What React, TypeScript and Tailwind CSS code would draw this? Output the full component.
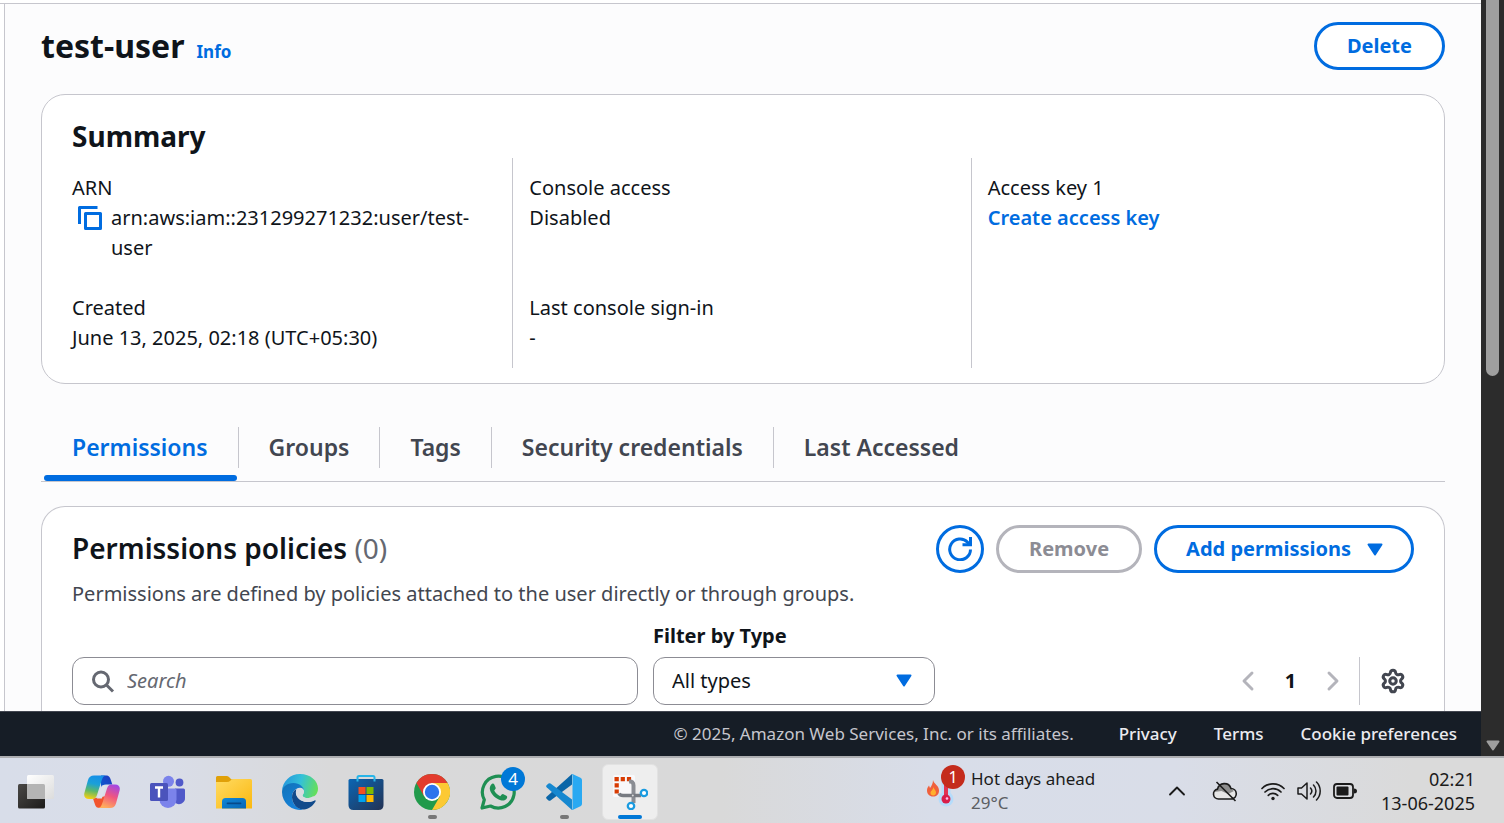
import type { ReactNode } from "react";
import { ChevronLeft, ChevronRight, ChevronUp, Settings } from "lucide-react";

const TABS = ["Permissions", "Groups", "Tags", "Security credentials", "Last Accessed"];

function Caret({ className = "" }: { className?: string }) {
  return (
    <svg viewBox="0 0 16 13" className={`h-[13px] w-4 ${className}`} aria-hidden="true">
      <path d="M1.5 1.5h13L8 11.5z" fill="#006ce0" stroke="#006ce0" strokeWidth="2" strokeLinejoin="round" />
    </svg>
  );
}

function Field({ label, children }: { label: string; children: ReactNode }) {
  return (
    <div className="min-h-[90px]">
      <dt>{label}</dt>
      <dd>{children}</dd>
    </div>
  );
}

function SummaryCard() {
  return (
    <section className="mt-6 rounded-3xl border border-[#c6c6cd] bg-white pt-[23px] pr-[15px] pb-[15px] pl-3">
      <h2 className="pl-[18px] text-[28px] leading-9 font-bold">Summary</h2>
      <div className="mt-1 grid grid-cols-3">
        <dl className="flex flex-col gap-[30px] border-l border-transparent py-[15px] pr-4 pl-[17px] [&>div:last-child]:min-h-[60px]">
          <Field label="ARN">
            <span className="flex items-start">
              <button type="button" aria-label="Copy ARN" className="mt-[3px] mr-[9px] ml-1.5 shrink-0">
                <svg viewBox="0 0 24 24" className="size-6" fill="none" stroke="#006ce0" strokeWidth="3" strokeLinejoin="round">
                  <path d="M1.500 18V1.500H19.500" />
                  <path d="M7.500 7.500h15v15h-15z" />
                </svg>
              </button>
              <span>arn:aws:iam::231299271232:user/test-user</span>
            </span>
          </Field>
          <Field label="Created">June 13, 2025, 02:18 (UTC+05:30)</Field>
        </dl>
        <dl className="flex flex-col gap-[30px] border-l border-[#c6c6cd] py-[15px] pr-4 pl-4 [&>div:last-child]:min-h-[60px]">
          <Field label="Console access">Disabled</Field>
          <Field label="Last console sign-in">-</Field>
        </dl>
        <dl className="border-l border-[#c6c6cd] py-[15px] pr-4 pl-4">
          <Field label="Access key 1">
            <a href="#create" className="font-semibold text-[#006ce0]">Create access key</a>
          </Field>
        </dl>
      </div>
    </section>
  );
}

function Tabs() {
  return (
    <div role="tablist" className="mt-[43px] flex border-b border-[#c6c6cd]">
      {TABS.map((t, i) => (
        <button key={t} type="button" role="tab" aria-selected={i === 0} className={`flex flex-col text-[23px] font-semibold ${i === 0 ? "ml-px text-[#006ce0]" : "text-[#424650]"}`}>
          <span className={`flex h-[41px] items-center px-[30px] pb-0.5 ${i < TABS.length - 1 ? "border-r border-[#c6c6cd]" : ""}`}>{t}</span>
          <span className={`mx-0.5 mt-[7px] h-1.5 self-stretch rounded-full ${i === 0 ? "bg-[#006ce0]" : ""}`} />
        </button>
      ))}
    </div>
  );
}

function PoliciesCard() {
  return (
    <section className="mt-6 rounded-t-3xl border border-b-0 border-[#c6c6cd] bg-white px-[30px] pt-[18px] pb-6">
      <div className="flex items-center gap-3">
        <h2 className="mr-auto pb-0.5 text-[28px] leading-9 font-semibold">
          Permissions policies <span className="font-normal text-[#656871]">(0)</span>
        </h2>
        <button type="button" aria-label="Refresh" className="flex size-12 items-center justify-center rounded-full border-3 border-[#006ce0]">
          <svg viewBox="0 0 24 24" className="size-6" fill="none" stroke="#006ce0" strokeWidth="3">
            <path d="M22.500 12.500A10.400 10.400 0 1 1 19.600 5.200L22 8" />
            <path d="M14.500 7.800H22.500V0" />
          </svg>
        </button>
        <button type="button" disabled className="h-12 rounded-full border-3 border-[#b4b4bb] px-[30px] font-bold text-[#8c8c94]">Remove</button>
        <button type="button" className="flex h-12 items-center gap-4 rounded-full border-3 border-[#006ce0] pr-7 pl-[29px] font-bold text-[#006ce0]">
          Add permissions
          <Caret />
        </button>
      </div>
      <p className="mt-1.5 text-[#424650]">Permissions are defined by policies attached to the user directly or through groups.</p>
      <div className="mt-3 flex items-end">
        <label className="flex h-12 max-w-[566px] flex-1 items-center gap-3 rounded-xl border border-[#8c8c94] bg-white pl-[18px]">
          <svg viewBox="0 0 24 24" className="size-6 shrink-0" fill="none" stroke="#656871" strokeWidth="3">
            <circle cx="10" cy="10.500" r="7.500" />
            <path d="M15.500 16L22 22.500" />
          </svg>
          <input type="text" aria-label="Search policies" placeholder="Search" className="min-w-0 flex-1 bg-transparent outline-none placeholder:text-[#656871] placeholder:italic" />
        </label>
        <div className="ml-[15px] flex w-[282px] flex-col gap-1.5">
          <label htmlFor="type" className="font-bold">Filter by Type</label>
          <div className="relative">
            <select id="type" className="h-12 w-full appearance-none rounded-xl border border-[#8c8c94] bg-white pr-12 pl-[18px]">
              <option>All types</option>
            </select>
            <Caret className="pointer-events-none absolute top-[17px] right-[23px]" />
          </div>
        </div>
        <nav aria-label="Pagination" className="ml-auto flex h-12 items-center">
          <button type="button" aria-label="Previous page"><ChevronLeft className="size-8 text-[#b4b4bb]" strokeWidth={2.2} /></button>
          <button type="button" className="w-[53px] font-bold">1</button>
          <button type="button" aria-label="Next page"><ChevronRight className="size-8 text-[#b4b4bb]" strokeWidth={2.2} /></button>
          <span className="ml-2.5 h-full border-l border-[#c6c6cd]" />
          <button type="button" aria-label="Preferences" className="mr-2 ml-5"><Settings className="size-[26px] text-[#424650]" strokeWidth={2.8} /></button>
        </nav>
      </div>
    </section>
  );
}

function TaskViewIcon() {
  return (
    <svg viewBox="0 0 36 36" className="size-9">
      <defs>
        <linearGradient id="tvDark" x1="0" y1="0" x2="1" y2="1"><stop stopColor="#4a4846" /><stop offset="1" stopColor="#1c1b1a" /></linearGradient>
        <linearGradient id="tvLight" x1="0" y1="0" x2="1" y2="1"><stop stopColor="#fff" /><stop offset="1" stopColor="#dcdcdc" /></linearGradient>
      </defs>
      <rect x="0" y="10" width="27" height="24.500" rx="1.500" fill="url(#tvDark)" />
      <rect x="9" y="1" width="27" height="24" rx="1.500" fill="url(#tvLight)" />
      <path d="M9 10h16.500q1.500 0 1.500 1.500V25H10.500Q9 25 9 23.500z" fill="#b4b4b4" />
    </svg>
  );
}

function CopilotIcon() {
  return (
    <svg viewBox="0 0 36 36" className="size-9">
      <defs>
        <linearGradient id="cpA" x1=".5" y1="0" x2=".3" y2="1"><stop stopColor="#1690e8" /><stop offset=".35" stopColor="#1ba0d8" /><stop offset=".65" stopColor="#5cb86a" /><stop offset="1" stopColor="#f5cf12" /></linearGradient>
        <linearGradient id="cpB" x1=".8" y1="0" x2=".4" y2="1"><stop stopColor="#a045e8" /><stop offset=".5" stopColor="#f0567f" /><stop offset="1" stopColor="#ffad5c" /></linearGradient>
        <linearGradient id="cpC" x1="0" y1="1" x2="1" y2="0"><stop stopColor="#0b5bd0" /><stop offset="1" stopColor="#2039c0" /></linearGradient>
      </defs>
      <path d="M17 1.500h5c3 0 4 1.500 5 5l1.300 4H22c-3 0-4 1-5 4z" fill="url(#cpC)" />
      <path d="M9 24.500l1.800 5.500c1 3 2.200 4 5.200 4h3.500l3-12z" fill="#f2542d" />
      <path d="M10 1.500h12c-3 .6-3.700 3-4.700 6L13 21c-.9 2.800-2 4-5 4H5c-4 0-5.400-2.700-4.600-6L4 6c1-3 2.700-4.500 6-4.500z" fill="url(#cpA)" />
      <path d="M26 34H14c3-.6 3.700-3 4.700-6L23 14.500c.9-2.800 2-4 5-4h3c4 0 5.400 2.700 4.600 6L32 29.500c-1 3-2.700 4.500-6 4.500z" fill="url(#cpB)" />
      <path d="M17.800 11.500h4.200L17.800 24.500h-5z" fill="#dde1ec" />
    </svg>
  );
}

function TeamsIcon() {
  return (
    <svg viewBox="0 0 36 36" className="size-9">
      <circle cx="29.500" cy="8.500" r="3.900" fill="#5059c9" />
      <path d="M25 14.500h8.500q1.500 0 1.500 1.500v7.500a6 6 0 0 1-10 5z" fill="#5059c9" />
      <circle cx="18.500" cy="7.300" r="5.500" fill="#7b83eb" />
      <path d="M11 14.500h14q1.500 0 1.500 1.500v9.500a8.500 8.500 0 0 1-17 0V16q0-1.500 1.500-1.500z" fill="#7b83eb" />
      <rect x="0" y="9" width="18" height="18" rx="1.500" fill="#4b53bc" />
      <path d="M5 13.500h8M9 13.500v10" stroke="#fff" strokeWidth="2.400" />
    </svg>
  );
}

function FolderIcon() {
  return (
    <svg viewBox="0 0 36 36" className="size-9">
      <defs>
        <linearGradient id="fold" x1="0" y1="0" x2="1" y2="1"><stop stopColor="#ffdb63" /><stop offset="1" stopColor="#fbb80f" /></linearGradient>
        <linearGradient id="foldBlue" x1="0" y1="0" x2="1" y2="1"><stop stopColor="#1088d8" /><stop offset="1" stopColor="#0866b4" /></linearGradient>
      </defs>
      <path d="M0 3.500Q0 2 1.500 2h9q1.500 0 2.500 1l2.500 2.500H34V12H0z" fill="#e0a008" />
      <path d="M0 8h11q2 0 3.500-1.500t3-1.500h17Q36 5 36 6.500V34.500H0z" fill="url(#fold)" />
      <path d="M6 34.500V27.500q0-3.500 3.500-3.500h17q3.500 0 3.500 3.500v7z" fill="url(#foldBlue)" />
      <path d="M11.500 29.300h13" stroke="#064a8a" strokeWidth="1.800" strokeLinecap="round" />
    </svg>
  );
}

function EdgeIcon() {
  return (
    <svg viewBox="0 0 36 36" className="size-9">
      <defs>
        <linearGradient id="edTop" x1="0" y1=".3" x2="1" y2=".5"><stop stopColor="#2495dd" /><stop offset=".5" stopColor="#34c1d8" /><stop offset="1" stopColor="#65df5a" /></linearGradient>
        <linearGradient id="edL" x1="0" y1="0" x2=".6" y2="1"><stop stopColor="#1172b8" /><stop offset="1" stopColor="#1683dc" /></linearGradient>
      </defs>
      <path d="M0 17C.5 7.500 8 0 18 0c10.500 0 18 7 18 14.500 0 6-4.500 9.500-9.500 9.500-4 0-6-1.300-6-2.600 0-1 1.500-1.500 1.500-4.400 0-3-4-7-10-7C6 10 1.500 13 0 17z" fill="url(#edTop)" />
      <path d="M0 18c0-5 5-9 11.500-9 6 0 10.500 4 10.500 8-1-2-2.500-3-4.500-3-4 0-7.500 4-7.500 9 0 6 4 11.500 11 12.700A18 18 0 0 1 0 18z" fill="url(#edL)" />
      <path d="M14.500 15c-3 1.500-4.700 5-4.500 8.500.3 6.500 5.500 12.300 12 12 4.500-.3 9-3.500 11.500-8 .5-1-.4-1.500-1.200-1C30 27.800 27.500 28 25 28c-6.500-.2-11-5-11-9.500 0-1.500.1-2.500.5-3.500z" fill="#114a8b" />
      <path d="M22 17.500c0-2-1.800-3.700-4-3.700-2.400 0-4.200 2-4.200 4.700 0 4.800 4.700 9.300 11.200 9.500 2.700.1 5.500-.5 7.800-2l.7-2.500-2.500-1.200c-1.500 1.200-3 1.700-4.500 1.700-4 0-6-1.300-6-2.600 0-1 1.500-1.500 1.500-3.900z" fill="#d9dbe0" />
    </svg>
  );
}

function StoreIcon() {
  return (
    <svg viewBox="0 0 36 36" className="size-9">
      <defs><linearGradient id="st" x1="0" y1="0" x2="1" y2="1"><stop stopColor="#0b66b4" /><stop offset="1" stopColor="#233253" /></linearGradient></defs>
      <path d="M9.500 6.500V3.500Q9.500 2 11 2h14q1.500 0 1.500 1.500v3" fill="none" stroke="#28b5e8" strokeWidth="2" />
      <path d="M.5 6.500Q.5 5 2 5h32q1.500 0 1.500 1.500V31q0 5-5 5h-25q-5 0-5-5z" fill="url(#st)" />
      <path d="M9.500 5v2.500M26.500 5v2.500" stroke="#28b5e8" strokeWidth="2" />
      <path d="M10.500 13h7v7h-7z" fill="#f25022" /><path d="M18.500 13h7v7h-7z" fill="#7fba00" />
      <path d="M10.500 21h7v7h-7z" fill="#00a4ef" /><path d="M18.500 21h7v7h-7z" fill="#ffb900" />
    </svg>
  );
}

function ChromeIcon() {
  return (
    <svg viewBox="0 0 36 36" className="size-9">
      <circle cx="18" cy="18" r="18" fill="#219a4b" />
      <path d="M18 9h15.590A18 18 0 0 1 18 36l7.800-13.500z" fill="#fcc934" />
      <path d="M10.200 22.500L2.410 9A18 18 0 0 1 33.590 9H18z" fill="#e33b2e" />
      <circle cx="18" cy="18" r="9" fill="#fff" />
      <circle cx="18" cy="18" r="7.200" fill="#2b74ec" />
    </svg>
  );
}

function WhatsAppIcon() {
  return (
    <svg viewBox="0 0 36 36" className="size-9">
      <path d="M2 34l2.300-8.300A15.900 15.900 0 1 1 10.500 32z" fill="none" stroke="#1f8f53" strokeWidth="3.200" strokeLinejoin="round" />
      <path d="M11.500 10.200c.8-.9 2.300-.8 2.800.3l1.300 3c.3.700.1 1.300-.4 1.800l-1 1.200c1.300 2.500 3.200 4.400 6 5.700l1.500-1.600c.5-.6 1.100-.7 1.700-.4l3 1.500c.9.500 1 1.500.5 2.500-1.200 2.200-3.800 2.800-6.300 2C15.500 24.700 11.300 20.500 10 16c-.6-2.200 0-4.200 1.500-5.800z" fill="#1f8f53" />
    </svg>
  );
}

function CodeIcon() {
  return (
    <svg viewBox="0 0 36 36" className="size-9">
      <path d="M26 0v10.500L4.500 26.500q-1 .7-2-.1L.6 24.700q-1-1 0-2z" fill="#0a66a8" />
      <path d="M.6 13.300L26 36V25.500L4.500 9.500q-1-.7-2 .1L.6 11.300q-1 1 0 2z" fill="#1688d0" />
      <path d="M25.500.4q.7-.6 1.500-.2l7.500 3.500Q36 4.500 36 6v24q0 1.500-1.500 2.300L27 35.800q-1 .3-1.800-.3 1.300.5 1.300-1V1.500q0-1-1-1.100z" fill="#29a9f2" />
    </svg>
  );
}

function SnipIcon() {
  return (
    <svg viewBox="0 0 36 36" className="size-9">
      <rect x="1" y="1" width="22" height="22" rx="1.500" fill="#f8f8fa" />
      <path d="M2.500 5.200h17M4.700 3v17" fill="none" stroke="#d83b01" strokeWidth="4.200" strokeDasharray="4.200 2" />
      <path d="M17 7.500q4.500-.5 4.500 4V29" fill="none" stroke="#8a8d93" strokeWidth="4" />
      <path d="M7 19.500q1 2 4 2H29" fill="none" stroke="#777b82" strokeWidth="3.500" />
      <circle cx="20.800" cy="21.500" r="1" fill="#ddd" />
      <circle cx="32" cy="19" r="3.200" fill="#fff" stroke="#1a9be0" strokeWidth="2.300" />
      <circle cx="19" cy="32" r="3.200" fill="#fff" stroke="#1a9be0" strokeWidth="2.300" />
    </svg>
  );
}

const APPS: { name: string; icon: ReactNode; state?: "open" | "active"; badge?: string }[] = [
  { name: "Task view", icon: <TaskViewIcon /> },
  { name: "Copilot", icon: <CopilotIcon /> },
  { name: "Teams", icon: <TeamsIcon /> },
  { name: "File Explorer", icon: <FolderIcon /> },
  { name: "Edge", icon: <EdgeIcon /> },
  { name: "Store", icon: <StoreIcon /> },
  { name: "Chrome", icon: <ChromeIcon />, state: "open" },
  { name: "WhatsApp", icon: <WhatsAppIcon />, badge: "4" },
  { name: "Code", icon: <CodeIcon />, state: "open" },
  { name: "Snipping Tool", icon: <SnipIcon />, state: "active" },
];

function Tray() {
  return (
    <div className="flex items-center text-[#1b1b1b]">
      <button type="button" aria-label="Show hidden icons"><ChevronUp className="size-7" strokeWidth={1.6} /></button>
      <svg viewBox="0 0 26 22" className="ml-[21px] h-[22px] w-[26px]">
        <path d="M6.500 19a5 5 0 0 1-1-9.900A7 7 0 0 1 19 8.500 5.300 5.300 0 0 1 20 19z" fill="#e6e6e6" />
        <path d="M2 12a5 5 0 0 1 3.500-2.900A7 7 0 0 1 19 8.500L22 11l-6 3-6.500-3z" fill="#8d8d8d" />
        <path d="M6.500 19a5 5 0 0 1-1-9.900A7 7 0 0 1 19 8.500 5.300 5.300 0 0 1 20 19zM4.500 2L23.500 21" fill="none" stroke="#1b1b1b" strokeWidth="1.600" />
      </svg>
      <svg viewBox="0 0 24 20" className="ml-[23px] h-5 w-6" fill="none" stroke="currentColor" strokeWidth="1.700" strokeLinecap="round">
        <path d="M1 7.500a15.500 15.500 0 0 1 22 0M4 11a11.400 11.400 0 0 1 16 0M7.300 14.300a6.800 6.800 0 0 1 9.400 0" />
        <circle cx="12" cy="17.500" r="1.700" fill="currentColor" stroke="none" />
      </svg>
      <svg viewBox="0 0 24 20" className="ml-3 h-5 w-6" fill="none" stroke="currentColor" strokeWidth="1.500" strokeLinecap="round" strokeLinejoin="round">
        <path d="M1 7v6h3.500l5.500 5V2L4.500 7zM13.500 7a4.500 4.500 0 0 1 0 6M16.500 4a8.500 8.500 0 0 1 0 12M19.500 1a12.800 12.800 0 0 1 0 18" />
      </svg>
      <svg viewBox="0 0 24 20" className="ml-3 h-5 w-6">
        <rect x="1" y="3" width="19" height="14" rx="3" fill="none" stroke="currentColor" strokeWidth="1.800" />
        <rect x="3.500" y="5.500" width="12" height="9" rx="1" fill="currentColor" />
        <path d="M21 7.500q3 0 3 2.500t-3 2.500z" fill="currentColor" />
      </svg>
    </div>
  );
}

function Taskbar() {
  return (
    <div className="flex h-[67px] shrink-0 items-stretch border-t-2 border-[#adaeb1] bg-[linear-gradient(90deg,#d8dde9_0%,#d9dde8_11%,#d9d9da_22%,#d9d9d9_48%,#d8dde9_62%,#d9dde8_78%,#dadada_94%)] pt-px pr-[29px] pl-[3px]">
      {APPS.map((a) => (
        <div key={a.name} className="flex w-[66px] shrink-0 justify-center">
          <button
            type="button"
            aria-label={a.name}
            className={`relative mt-[5px] flex h-14 w-14 items-start justify-center rounded-md border pt-[9px] ${a.state === "active" ? "border-[#e2e2e2] bg-[#eeeeee]" : "border-transparent"}`}
          >
            {a.icon}
            {a.badge && (
              <span className="absolute top-0.5 right-0 flex size-6 items-center justify-center rounded-full bg-[#0078d7] text-[17px] text-white">{a.badge}</span>
            )}
            {a.state && (
              <span className={`absolute bottom-0 h-1 rounded-full ${a.state === "active" ? "w-6 bg-[#0078d7]" : "w-[9px] bg-[#777777]"}`} />
            )}
          </button>
        </div>
      ))}
      <div className="ml-auto flex w-[172px] items-center">
        <div className="relative h-12 w-[46px] shrink-0">
          <svg viewBox="0 0 46 48" className="h-12 w-[46px]">
            <path d="M8 13c1 4 6 5.500 6 10.500 0 4-2.500 6-6 6s-6-2.500-6-6c0-2 .8-3.500 2-5l1 2.500c1.500-2 3-4.500 3-8z" fill="#f0603c" />
            <path d="M8.500 20c.3 2.500 2.500 3 2.500 5.500 0 1.800-1.200 3-2.800 3s-2.700-1-2.700-2.700S8 23 8.500 20z" fill="#ffb02e" />
            <path d="M21 10v22" stroke="#b5dcfb" strokeWidth="9" strokeLinecap="round" />
            <circle cx="21" cy="32" r="7.500" fill="#b5dcfb" />
            <path d="M21 12v20" stroke="#e23252" strokeWidth="4" />
            <circle cx="21" cy="32" r="4.500" fill="#d81e4a" />
            <circle cx="22" cy="31.500" r="1.300" fill="#fbe" />
          </svg>
          <span className="absolute -top-0.5 right-[6px] flex size-6 items-center justify-center rounded-full bg-[#c42b1c] text-[16px] text-white">1</span>
        </div>
        <div className="text-[17px] leading-6 whitespace-nowrap">
          <div className="text-[#1b1b1b]">Hot days ahead</div>
          <div className="text-[#5c5e63]">29°C</div>
        </div>
      </div>
      <div className="ml-[66px] flex items-center gap-6">
        <Tray />
        <div className="w-[94px] text-right text-[18px] leading-6 whitespace-nowrap text-[#1b1b1b]">
          <div>02:21</div>
          <div>13-06-2025</div>
        </div>
      </div>
    </div>
  );
}

export default function App() {
  return (
    <div className="flex h-screen flex-col overflow-hidden bg-white font-['Noto_Sans','Open_Sans',sans-serif] text-[20px] leading-[30px] text-[#0f141a]">
      <div className="flex min-h-0 flex-1">
        <div className="flex min-w-0 flex-1 flex-col">
          <div className="flex min-h-0 flex-1 flex-col pt-[3px]">
            <div className="min-h-0 flex-1 border-t border-[#c6c6cd] pl-1">
              <main className="h-full overflow-hidden border-l border-[#c6c6cd] bg-[#fcfcfd] px-9 pt-[18px]">
                <header className="flex items-center justify-between">
                  <div className="flex items-baseline gap-3 pb-0.5">
                    <h1 className="text-[32px] leading-[45px] font-bold">test-user</h1>
                    <a href="#info" className="text-[17px] font-bold text-[#006ce0]">Info</a>
                  </div>
                  <button type="button" className="h-12 rounded-full border-3 border-[#006ce0] bg-white px-[30px] font-bold text-[#006ce0]">Delete</button>
                </header>
                <SummaryCard />
                <Tabs />
                <PoliciesCard />
              </main>
            </div>
          </div>
          <footer className="flex h-[45px] shrink-0 items-center justify-end border-t border-[#424650] bg-[#161d26] pr-6 text-[17px] text-[#ebebf0]">
            <span className="text-[#c6c6cd]">© 2025, Amazon Web Services, Inc. or its affiliates.</span>
            <a href="#privacy" className="ml-[45px] font-medium">Privacy</a>
            <a href="#terms" className="ml-[37px] font-medium">Terms</a>
            <a href="#cookies" className="ml-[37px] font-medium">Cookie preferences</a>
          </footer>
        </div>
        <div aria-hidden="true" className="flex w-[23px] shrink-0 flex-col items-center justify-between bg-[#2c2c2c] pb-[5px]">
          <div className="h-1/2 w-[13px] rounded-b-full bg-[#9f9f9f]" />
          <svg viewBox="0 0 14 11" className="h-[11px] w-3.5"><path d="M1.500 1.500h11L7 9.500z" fill="#9f9f9f" stroke="#9f9f9f" strokeWidth="2" strokeLinejoin="round" /></svg>
        </div>
      </div>
      <Taskbar />
    </div>
  );
}
